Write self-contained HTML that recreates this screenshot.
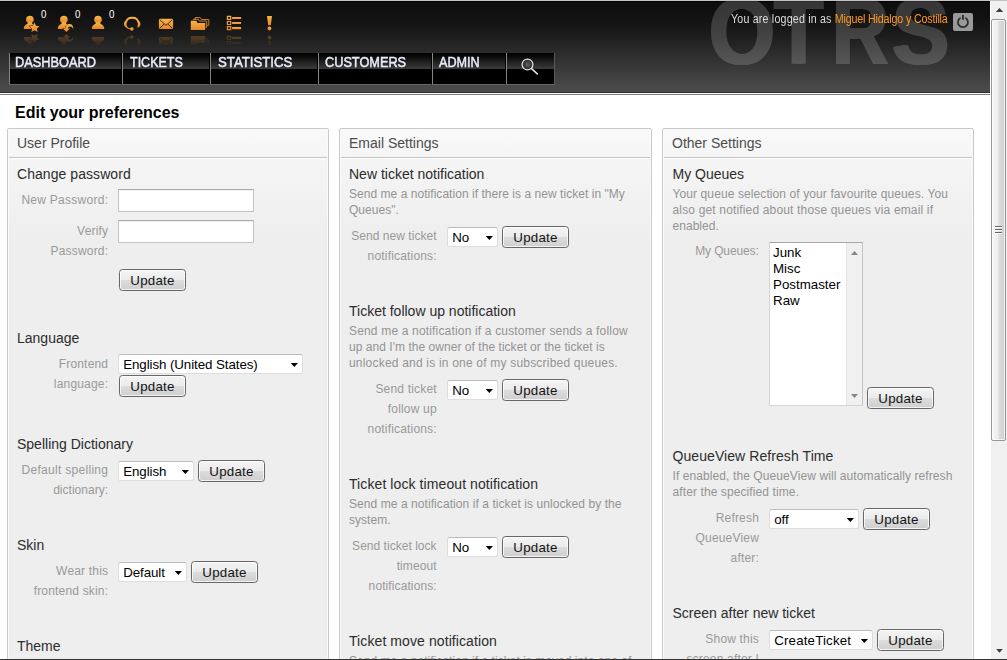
<!DOCTYPE html>
<html>
<head>
<meta charset="utf-8">
<title>Edit your preferences</title>
<style>
*{box-sizing:border-box;margin:0;padding:0}
html,body{width:1007px;height:660px;overflow:hidden;background:#fff;font-family:"Liberation Sans",Arial,sans-serif}
#win{position:absolute;left:0;top:0;width:1007px;height:660px;overflow:hidden;background:#fff}
#page{position:absolute;left:0;top:0;width:990px;height:659px;overflow:hidden;background:#fff}
#topline{position:absolute;left:0;top:0;width:1007px;height:1px;background:#c4c4c4;z-index:20}
#botline{position:absolute;left:0;top:659px;width:1007px;height:1px;background:#333;z-index:20}
#hdr{position:absolute;left:0;top:1px;width:990px;height:92px;background:linear-gradient(#000 0,#000 1px,#0e0e0e 1px,#101010 14px,#1b1b1b 33px,#2a2a2a 50px,#494949 86px,#4a4a4a 91px,#303030 91px);overflow:hidden}
#hline{position:absolute;left:0;top:94px;width:990px;height:1px;background:#7a7a7a}
#logo{position:absolute;left:0;top:-13.5px;width:990px;height:110px;opacity:.17;color:#fff;font-weight:bold;font-size:90px;line-height:90px}
#logo span{position:absolute;top:0;transform-origin:0 76.5px;text-shadow:1.5px 0 #fff,-1.5px 0 #fff}
#user{position:absolute;left:731px;top:11px;font-size:12px;color:#ddd;white-space:nowrap;line-height:14px;transform:scaleX(.889);transform-origin:0 0}
#user b{font-weight:normal;color:#f92}
#logout{position:absolute;left:953px;top:12px;width:20px;height:18px;background:#999;border-radius:2px}
#nav{position:absolute;left:9px;top:52px;height:32px;white-space:nowrap}
.nv{position:absolute;top:0;height:32px;background:linear-gradient(#000 0,#080808 3px,#3a3a3a 15.500px,#000 16px,#000 100%);border-left:1px solid #858585;border-right:1px solid #000;border-bottom:1px solid #666;color:#e4ecf8;font-weight:normal;-webkit-text-stroke:.5px #e4ecf8;font-size:14px;line-height:16px}
.nv span{position:absolute;top:1px;transform-origin:0 0;display:block;white-space:nowrap}
h1{position:absolute;left:15px;top:103px;font-size:16px;line-height:20px;font-weight:bold;color:#000;white-space:nowrap}
.col{position:absolute;top:128px;height:560px;background:linear-gradient(#f5f5f5 30px,#eee 110px);border:1px solid #c9c9c9;border-radius:2px;box-shadow:inset 0 0 0 1px #fafafa}
.col .hd{position:absolute;left:1px;top:1px;right:1px;height:28px;background:linear-gradient(#f9f9f9,#f5f5f5);border-bottom:1px solid #c4c4c4;box-shadow:0 1px 0 #fff;font-size:14px;line-height:18px;color:#4c4c4c;padding:4px 0 0 8px}
.t{position:absolute;font-size:14px;line-height:18px;color:#2c2c2c;white-space:nowrap}
.d{position:absolute;font-size:12px;line-height:16px;color:#939393;white-space:nowrap;letter-spacing:.04px}
.l{position:absolute;font-size:12px;line-height:20px;color:#999;text-align:right;white-space:nowrap;letter-spacing:.18px}
.in{position:absolute;background:#fff;border:1px solid #c4c4c4;border-top-color:#aaa;height:23px;box-shadow:inset 0 1px 1px #eee}
.btn{position:absolute;width:67px;height:22px;border:1px solid #676767;border-radius:3.5px;background:linear-gradient(#f4f4f4,#ebebeb 48%,#dcdcdc 52%,#cfcfcf);font-size:13.33px;line-height:19px;padding-top:1px;color:#141414;text-align:center;letter-spacing:.25px;box-shadow:inset 0 0 0 1px rgba(255,255,255,.75)}
.sel{position:absolute;height:20px;background:#fff;border:1px solid #ddd;border-top-color:#bbb;border-radius:2.500px;font-size:13.33px;line-height:20px;color:#000;padding-left:4.2px;letter-spacing:-.08px;white-space:nowrap;overflow:hidden}
.sel i{position:absolute;right:4px;top:7.900px;width:7.300px;height:4.200px;background:#000;clip-path:polygon(0 0,100% 0,50% 100%)}
.lb{position:absolute;background:#fff;border:1px solid #d4d4d4;border-top-color:#a8a8a8;border-right-color:#c4c4c4;font-size:13.33px;line-height:16px;color:#000;overflow:hidden}
.lb .sb{position:absolute;right:0;top:0;bottom:0;width:16px;background:#f0f0f0;border-left:1px solid #e6e6e6}
.lb .sb:before{content:"";position:absolute;left:4px;top:8px;width:7px;height:4px;background:#858585;clip-path:polygon(0 100%,100% 100%,50% 0)}
.lb .sb:after{content:"";position:absolute;left:4px;bottom:7px;width:7px;height:4px;background:#858585;clip-path:polygon(0 0,100% 0,50% 100%)}
#sbar{position:absolute;left:990px;top:1px;width:17px;height:658px;background:#f0f0f0;border-left:1px solid #fff}
#sbar .th{position:absolute;left:0;top:18px;width:15px;height:422px;border:1px solid #979797;border-radius:2px;background:linear-gradient(90deg,#f6f6f6,#ededed 45%,#dcdcdc 55%,#cfcfd4);box-shadow:inset 0 0 0 1px rgba(255,255,255,.7)}
#sbar .th i{position:absolute;left:3px;width:7px;height:1px;background:#666;box-shadow:0 1px 0 #fff}
#sbar .up{position:absolute;left:4.800px;top:6.900px;width:7.400px;height:4.200px;background:#3c3c3c;clip-path:polygon(0 100%,100% 100%,50% 0)}
#sbar .dn{position:absolute;left:4.800px;top:647.500px;width:7.400px;height:4.200px;background:#3c3c3c;clip-path:polygon(0 0,100% 0,50% 100%)}
</style>
</head>
<body>
<div id="win">
<div id="page">
  <div id="hdr">
    <svg id="icons" width="300" height="52" viewBox="0 0 300 52" style="position:absolute;left:0;top:-1px">
      <defs>
        <linearGradient id="og" x1="0" y1="0" x2="0" y2="1"><stop offset="0" stop-color="#f7b548"/><stop offset="1" stop-color="#e8862a"/></linearGradient>
        <linearGradient id="fade" x1="0" y1="0" x2="0" y2="1"><stop offset="0" stop-color="#fff" stop-opacity=".38"/><stop offset="1" stop-color="#fff" stop-opacity="0"/></linearGradient>
        <mask id="fm" maskUnits="userSpaceOnUse" x="0" y="33" width="300" height="14"><rect x="0" y="33" width="300" height="13" fill="url(#fade)"/></mask>
        <g id="ic" fill="url(#og)">
          <circle cx="29.9" cy="19.5" r="3.800"/>
          <path d="M23.800 29c0-2.400 .8-4 3.200-5.100c.8-.4 1-.9 .7-1.700h4.400c-.3 .8-.1 1.300 .7 1.700c2.400 1.100 3.200 2.700 3.200 5.100z"/>
          <path d="M34.500 22.600l1.500 3.200l3.500 .4l-2.600 2.400l.7 3.500l-3.100-1.800l-3.100 1.800l.7-3.500l-2.600-2.400l3.500-.4z" stroke="#161616" stroke-width=".9" paint-order="stroke"/>
          <circle cx="63.900" cy="19.500" r="3.800"/>
          <path d="M57.800 29c0-2.400 .8-4 3.200-5.100c.8-.4 1-.9 .7-1.700h4.400c-.3 .8-.1 1.300 .7 1.700c1.300 .6 2.200 1.300 2.700 2.300l-5.500 2.800z"/>
          <path d="M62.900 28.600h2.400c-.1-3 2.300-4.800 4.700-4.600c2.400 .3 3.600 2.500 3.200 5.200c-.6-1.600-1.600-2.600-3-2.700c-1.400-.1-2.200 .8-2.300 2.100h2.100l-3.600 3.400z" stroke="#161616" stroke-width=".9" paint-order="stroke"/>
          <circle cx="98" cy="19.500" r="3.800"/>
          <path d="M91.800 29c0-2.400 .8-4 3.200-5.100c.8-.4 1-.9 .7-1.700h4.600c-.3 .8-.1 1.300 .7 1.700c2.400 1.100 3.300 2.700 3.300 5.100z"/>
          <path d="M126.100 22.500c.3-3.100 2.900-4.700 6.100-4.700c3.200 0 5.800 1.600 6.100 4.700" fill="none" stroke="url(#og)" stroke-width="1.900"/>
          <path d="M127.300 20.300c-2.300 .2-3.300 1.700-3.300 3.600c0 1.900 1 3.400 3.300 3.600c-1-2.300-1-4.900 0-7.200z"/>
          <path d="M137.100 20.300c2.300 .2 3.300 1.700 3.300 3.600c0 1.900-1 3.400-3.300 3.600c1-2.300 1-4.900 0-7.200z"/>
          <path d="M126.300 26.600c.9 1.800 2.600 2.500 5 2.300" fill="none" stroke="url(#og)" stroke-width="1.100"/>
          <circle cx="131.900" cy="28.900" r="1.750"/>
          <rect x="158.900" y="18.800" width="14.200" height="10.200" rx="1.200"/>
          <path d="M159.700 19.600l6.300 5.800l6.300-5.800M159.700 28.300l4.300-4.200M172.300 28.300l-4.300-4.200" fill="none" stroke="#2e1a06" stroke-width=".9"/>
          <path d="M195.200 19.800v-2.200h5.200l1 1.900h7.400v5.800h-1.600" fill="none" stroke="#d9892e" stroke-width=".9"/>
          <path d="M193.300 21.600v-2.400h5l1 1.900h7.400v6.400h-1.600" fill="none" stroke="#e3902f" stroke-width=".9"/>
          <path d="M190.800 20.700h5.600l1.100 2.300h7.700v7h-14.400z" stroke="#141414" stroke-width="1" paint-order="stroke"/>
          <path d="M227.400 16.400h3.300v3h-3.300zM227.400 21.500h3.300v3h-3.300zM227.400 26.600h3.300v3h-3.300z" fill="none" stroke="url(#og)" stroke-width="1.200"/>
          <rect x="232" y="16.900" width="9.100" height="2.100" rx=".5"/>
          <rect x="232" y="22" width="9.100" height="2.100" rx=".5"/>
          <rect x="232" y="27.100" width="9.100" height="2.100" rx=".5"/>
          <path d="M267 16h5l-1.200 9.300h-2.600z"/>
          <circle cx="269.450" cy="28.500" r="1.900"/>
        </g>
      </defs>
      <use href="#ic"/>
      <g mask="url(#fm)"><use href="#ic" transform="translate(0,66) scale(1,-1)"/></g>
      <g fill="#fff" font-family="Liberation Sans, Arial, sans-serif" font-size="11.7"><text x="41" y="18.200" textLength="5.400" lengthAdjust="spacingAndGlyphs">0</text><text x="74.900" y="18.200" textLength="5.400" lengthAdjust="spacingAndGlyphs">0</text><text x="108.900" y="18.200" textLength="5.400" lengthAdjust="spacingAndGlyphs">0</text></g>
    </svg>
    <div id="logo"><span style="left:709.15px;transform:scale(.9415,1.06)">O</span><span style="left:774.35px;transform:scale(.898,1.06)">T</span><span style="left:832.1px;transform:scale(.872,1.06)">R</span><span style="left:892px;transform:scale(.951,1.06)">S</span></div>
    <div id="user"><span style="letter-spacing:.21px">You are logged in as </span><b style="letter-spacing:-.18px">Miguel Hidalgo y Costilla</b></div>
    <div id="logout"><svg width="20" height="18" viewBox="0 0 20 18" style="position:absolute;left:0;top:0"><path d="M7.600 4.800A5 5 0 1 0 12.300 4.800" fill="none" stroke="#2b2b2b" stroke-width="1.700"/><path d="M9.950 2.100V6.800" stroke="#2b2b2b" stroke-width="1.800"/></svg></div>
    <div id="nav">
      <div class="nv" style="left:0px;width:113px"><span style="left:5.4px;transform:scaleX(0.913)">DASHBOARD</span></div>
      <div class="nv" style="left:113px;width:88px"><span style="left:7.1px;transform:scaleX(0.893)">TICKETS</span></div>
      <div class="nv" style="left:201px;width:108px"><span style="left:6.7px;transform:scaleX(0.943)">STATISTICS</span></div>
      <div class="nv" style="left:309px;width:114px"><span style="left:6.0px;transform:scaleX(0.909)">CUSTOMERS</span></div>
      <div class="nv" style="left:423px;width:74px"><span style="left:6.2px;transform:scaleX(0.902)">ADMIN</span></div>
      <div class="nv" style="left:497px;width:49px;border-right-color:#5a5a5a"><svg width="48" height="32" viewBox="0 0 48 32" style="position:absolute;left:-1px;top:0"><defs><radialGradient id="mg"><stop offset="0" stop-color="#666"/><stop offset="1" stop-color="#222"/></radialGradient></defs><circle cx="21.500" cy="11.500" r="5.400" fill="url(#mg)" stroke="#e8e8e8" stroke-width="1.200"/><path d="M25.800 15.900L31.300 20.900" stroke="#ddd" stroke-width="1.600" stroke-linecap="round"/></svg></div>
    </div>
  </div>
  <div id="hline"></div>
  <h1>Edit your preferences</h1>
  <div class="col" style="left:7px;width:322px"><div class="hd">User Profile</div></div>
  <div class="col" style="left:339px;width:313px"><div class="hd">Email Settings</div></div>
  <div class="col" style="left:662px;width:312px"><div class="hd">Other Settings</div></div>
  <div class="t" style="left:17px;top:165px;letter-spacing:0.06px">Change password</div>
  <div class="l" style="left:-11.71px;width:120px;top:190px;letter-spacing:0.27px">New Password:</div>
  <div class="in" style="left:118px;top:189px;width:136px"></div>
  <div class="l" style="left:-11.8px;width:120px;top:221px">Verify</div>
  <div class="l" style="left:-11.8px;width:120px;top:241px">Password:</div>
  <div class="in" style="left:118px;top:220px;width:136px"></div>
  <div class="btn" style="left:119px;top:269px">Update</div>
  <div class="t" style="left:17px;top:329px">Language</div>
  <div class="l" style="left:-11.8px;width:120px;top:354px">Frontend</div>
  <div class="l" style="left:-11.8px;width:120px;top:374px">language:</div>
  <div class="sel" style="left:118px;top:354px;width:185px">English (United States)<i></i></div>
  <div class="btn" style="left:119px;top:375px">Update</div>
  <div class="t" style="left:17px;top:435px">Spelling Dictionary</div>
  <div class="l" style="left:-11.68px;width:120px;top:460px;letter-spacing:0.3px">Default spelling</div>
  <div class="l" style="left:-11.96px;width:120px;top:480px;letter-spacing:0.02px">dictionary:</div>
  <div class="sel" style="left:118px;top:461px;width:76px">English<i></i></div>
  <div class="btn" style="left:198px;top:460px">Update</div>
  <div class="t" style="left:17px;top:536px">Skin</div>
  <div class="l" style="left:-11.8px;width:120px;top:561px">Wear this</div>
  <div class="l" style="left:-11.8px;width:120px;top:581px">frontend skin:</div>
  <div class="sel" style="left:118px;top:562px;width:69px">Default<i></i></div>
  <div class="btn" style="left:191px;top:561px">Update</div>
  <div class="t" style="left:17px;top:637px">Theme</div>
  <div class="t" style="left:349px;top:165px">New ticket notification</div>
  <div class="d" style="left:349px;top:186px">Send me a notification if there is a new ticket in "My</div>
  <div class="d" style="left:349px;top:202px">Queues".</div>
  <div class="l" style="left:316.67px;width:120px;top:226px;letter-spacing:0.05px">Send new ticket</div>
  <div class="l" style="left:316.8px;width:120px;top:246px">notifications:</div>
  <div class="sel" style="left:447px;top:227px;width:51px">No<i></i></div>
  <div class="btn" style="left:502px;top:226px">Update</div>
  <div class="t" style="left:349px;top:302px">Ticket follow up notification</div>
  <div class="d" style="left:349px;top:323px;letter-spacing:0.17px">Send me a notification if a customer sends a follow</div>
  <div class="d" style="left:349px;top:339px;letter-spacing:0.04px">up and I'm the owner of the ticket or the ticket is</div>
  <div class="d" style="left:349px;top:355px;letter-spacing:0.2px">unlocked and is in one of my subscribed queues.</div>
  <div class="l" style="left:316.8px;width:120px;top:379px">Send ticket</div>
  <div class="l" style="left:316.8px;width:120px;top:399px">follow up</div>
  <div class="l" style="left:316.8px;width:120px;top:419px">notifications:</div>
  <div class="sel" style="left:447px;top:380px;width:51px">No<i></i></div>
  <div class="btn" style="left:502px;top:379px">Update</div>
  <div class="t" style="left:349px;top:475px;letter-spacing:0.09px">Ticket lock timeout notification</div>
  <div class="d" style="left:349px;top:496px;letter-spacing:0.07px">Send me a notification if a ticket is unlocked by the</div>
  <div class="d" style="left:349px;top:512px;letter-spacing:0.04px">system.</div>
  <div class="l" style="left:316.65px;width:120px;top:536px;letter-spacing:0.03px">Send ticket lock</div>
  <div class="l" style="left:316.72px;width:120px;top:556px;letter-spacing:0.1px">timeout</div>
  <div class="l" style="left:316.72px;width:120px;top:576px;letter-spacing:0.1px">notifications:</div>
  <div class="sel" style="left:447px;top:537px;width:51px">No<i></i></div>
  <div class="btn" style="left:502px;top:536px">Update</div>
  <div class="t" style="left:349px;top:632px;letter-spacing:0.09px">Ticket move notification</div>
  <div class="d" style="left:349px;top:653px">Send me a notification if a ticket is moved into one of</div>
  <div class="t" style="left:672.5px;top:165px">My Queues</div>
  <div class="d" style="left:672.5px;top:186px;letter-spacing:0.1px">Your queue selection of your favourite queues. You</div>
  <div class="d" style="left:672.5px;top:202px;letter-spacing:0.16px">also get notified about those queues via email if</div>
  <div class="d" style="left:672.5px;top:218px;letter-spacing:0.04px">enabled.</div>
  <div class="l" style="left:638.7px;width:120px;top:241px;letter-spacing:-0.12px">My Queues:</div>
  <div class="lb" style="left:769px;top:242px;width:94px;height:164px"><div style="padding:2px 0 0 3px">Junk<br>Misc<br>Postmaster<br>Raw</div><div class="sb"></div></div>
  <div class="btn" style="left:867px;top:387px">Update</div>
  <div class="t" style="left:672.5px;top:447px;letter-spacing:0.075px">QueueView Refresh Time</div>
  <div class="d" style="left:672.5px;top:468px;letter-spacing:0.09px">If enabled, the QueueView will automatically refresh</div>
  <div class="d" style="left:672.5px;top:484px;letter-spacing:0.1px">after the specified time.</div>
  <div class="l" style="left:639px;width:120px;top:508px">Refresh</div>
  <div class="l" style="left:639px;width:120px;top:528px">QueueView</div>
  <div class="l" style="left:639px;width:120px;top:548px">after:</div>
  <div class="sel" style="left:769px;top:509px;width:90px">off<i></i></div>
  <div class="btn" style="left:863px;top:508px">Update</div>
  <div class="t" style="left:672.5px;top:604px">Screen after new ticket</div>
  <div class="l" style="left:639px;width:120px;top:629px">Show this</div>
  <div class="l" style="left:639px;width:120px;top:649px">screen after I</div>
  <div class="sel" style="left:769px;top:630px;width:104px;letter-spacing:0.16px">CreateTicket<i></i></div>
  <div class="btn" style="left:877px;top:629px">Update</div>
</div>
<div id="sbar"><div class="up"></div><div class="th"><i style="top:206px"></i><i style="top:209px"></i><i style="top:212px"></i></div><div class="dn"></div></div>
<div id="topline"></div>
<div id="botline"></div>
</div>
</body>
</html>
